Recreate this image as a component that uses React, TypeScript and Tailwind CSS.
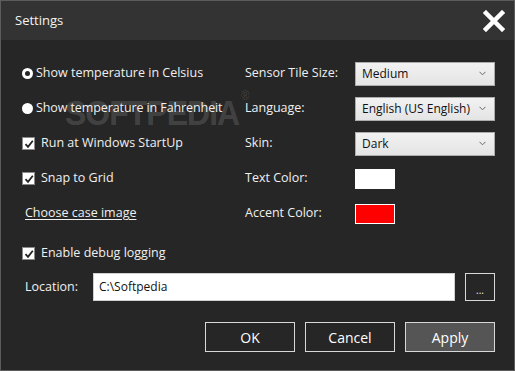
import React from 'react'

const font = "font-['Open_Sans',sans-serif]"

function Radio({ checked }: { checked?: boolean }) {
  return (
    <span className="w-[11px] h-[11px] rounded-full bg-white flex items-center justify-center shrink-0">
      {checked && <span className="w-[5px] h-[5px] rounded-full bg-[#262626]" />}
    </span>
  )
}

function Check() {
  return (
    <span className="w-[13px] h-[13px] bg-white border border-[#8a8a8a] flex items-center justify-center shrink-0">
      <svg width="10" height="10" viewBox="0 0 10 10">
        <path d="M1.5 5.2 L4 7.8 L8.8 1.8" fill="none" stroke="#222" strokeWidth="1.8" />
      </svg>
    </span>
  )
}

function Select({ value }: { value: string }) {
  return (
    <div className="w-[140px] h-[24px] border border-[#acacac] bg-gradient-to-b from-[#f2f2f2] to-[#e4e4e4] flex items-center justify-between pl-[6px] pr-[8px] text-[#111] text-[12px]">
      <span>{value}</span>
      <svg width="7" height="5" viewBox="0 0 7 5">
        <path d="M0.5 0.8 L3.5 3.8 L6.5 0.8" fill="none" stroke="#666" strokeWidth="1" />
      </svg>
    </div>
  )
}

function Btn({ label, dark }: { label: string; dark?: boolean }) {
  return (
    <div
      className={
        'w-[90px] h-[30px] border border-[#d8d8d8] flex items-center justify-center text-[14px] text-white ' +
        (dark ? 'bg-[#555555]' : 'bg-[#262626]')
      }
    >
      {label}
    </div>
  )
}

export default function App() {
  return (
    <div className={`${font} w-[515px] h-[371px] border border-[#5c5c5c] bg-[#262626] text-[#f0f0f0] text-[12.5px] flex flex-col relative overflow-hidden`}>
      {/* title bar */}
      <div className="h-[39px] bg-[#333333] flex items-center justify-between pl-[14px] pr-[9px] shrink-0">
        <span className="text-[13px] text-[#f4f4f4]">Settings</span>
        <svg width="22" height="22" viewBox="0 0 22 22">
          <path d="M3 3 L19 19 M19 3 L3 19" stroke="white" strokeWidth="4.5" strokeLinecap="square" />
        </svg>
      </div>

      <div className="flex pt-[16px]">
        {/* left column */}
        <div className="w-[244px] pl-[21px] flex flex-col">
          <div className="h-[35px] flex items-center gap-[3px]">
            <Radio checked />
            <span>Show temperature in Celsius</span>
          </div>
          <div className="h-[35px] flex items-center gap-[3px]">
            <Radio />
            <span className="tracking-[-0.1px]">Show temperature in Fahrenheit</span>
          </div>
          <div className="h-[35px] flex items-center gap-[6px]">
            <Check />
            <span>Run at Windows StartUp</span>
          </div>
          <div className="h-[35px] flex items-center gap-[6px]">
            <Check />
            <span>Snap to Grid</span>
          </div>
          <div className="h-[35px] flex items-center pl-[3px]">
            <span className="underline underline-offset-2">Choose case image</span>
          </div>
        </div>

        {/* right column */}
        <div className="flex flex-col">
          <div className="h-[35px] flex items-center">
            <span className="w-[110px]">Sensor Tile Size:</span>
            <Select value="Medium" />
          </div>
          <div className="h-[35px] flex items-center">
            <span className="w-[110px]">Language:</span>
            <Select value="English (US English)" />
          </div>
          <div className="h-[35px] flex items-center">
            <span className="w-[110px]">Skin:</span>
            <Select value="Dark" />
          </div>
          <div className="h-[35px] flex items-center">
            <span className="w-[110px]">Text Color:</span>
            <div className="w-[40px] h-[20px] bg-white" />
          </div>
          <div className="h-[35px] flex items-center">
            <span className="w-[110px]">Accent Color:</span>
            <div className="w-[40px] h-[20px] bg-[#ff0000] border border-white" />
          </div>
        </div>
      </div>

      <div className="pl-[21px] pt-[5px] h-[40px] flex items-center gap-[6px]">
        <Check />
        <span>Enable debug logging</span>
      </div>

      <div className="flex items-center pl-[24px] pr-[19px] h-[28px] mt-[2px]">
        <span className="w-[68px]">Location:</span>
        <div className="w-[362px] h-[28px] bg-white border border-[#cfcfcf] flex items-center pl-[5px] text-[#111] text-[12px]">
          C:\Softpedia
        </div>
        <div className="ml-[10px] w-[30px] h-[28px] border border-[#d8d8d8] flex items-end justify-center pb-[5px] text-[10px] leading-none">
          ...
        </div>
      </div>

      <div className="flex justify-end gap-[10px] pr-[19px] pt-[21px]">
        <Btn label="OK" />
        <Btn label="Cancel" />
        <Btn label="Apply" dark />
      </div>

      {/* watermark */}
      <div className="absolute left-[64px] top-[90px] pointer-events-none font-['Liberation_Sans',sans-serif] font-bold text-[32px] leading-[40px] text-white/15 tracking-[-1px] scale-y-110 origin-top-left">
        SOFTPEDIA<sup className="text-[11px] font-normal align-top relative top-[4px] ml-[2px]">®</sup>
      </div>
    </div>
  )
}
